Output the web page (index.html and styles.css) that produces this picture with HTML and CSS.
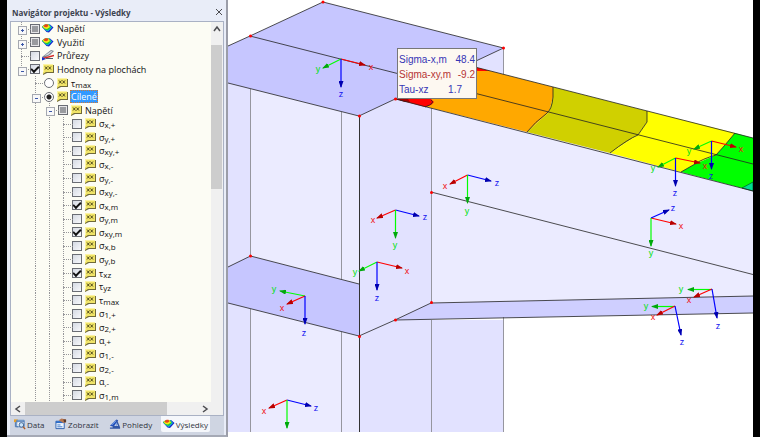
FILE: index.html
```html
<!DOCTYPE html>
<html lang="cs">
<head>
<meta charset="utf-8">
<title>Navigátor projektu - Výsledky</title>
<link rel="stylesheet" href="styles.css">
</head>
<body>
<svg class="defs" aria-hidden="true">
  <symbol id="tag" viewBox="0 0 12 11">
    <path d="M2 1H12V9H5L1 11V8.500H1.500V1Z" fill="#6f693a"/>
    <path d="M1 0H11V8H4L1 10V8Z" fill="#f0e468"/>
    <path d="M1 .5H11M1.500 0V8" stroke="#fdf4a4" fill="none"/>
    <path d="M3 2.500L5.500 5.500M5.500 2.500L3 5.500M6.500 2.500L9 5.500M9 2.500L6.500 5.500" stroke="#433d16" stroke-width=".9"/>
  </symbol>
  <symbol id="rainbow" viewBox="0 0 12 11">
    <path d="M0 4L3 1.500H8L11.500 4.500L7 9.500L4.500 9Z" fill="#1426c8"/>
    <path d="M0 4L3 1.500H7.500L10 4.500L6 8.500L4.500 8Z" fill="#12b5e8"/>
    <path d="M0 3.500L3 1.500H7L9 4.500L5.500 7.500L3 6.500Z" fill="#21cc32"/>
    <path d="M.5 3.500L3 1.500H6.500L8 4L5 6L2.500 5.500Z" fill="#f3ec19"/>
    <path d="M1.500 2.800L3.500 1.300H5.500L6.500 3L4.500 4.200L2.500 4Z" fill="#e9431b"/>
  </symbol>
  <symbol id="sections" viewBox="0 0 12 11">
    <path d="M0 7L9 0L12 1L8 5L2 8Z" fill="#7b828e"/>
    <path d="M2 6L9 1L10.500 1.500L6 5Z" fill="#d9dde3"/>
    <path d="M1 8.500L12 5.500" stroke="#d52828" stroke-width="1.300"/>
    <path d="M0 7V10.500L4 9Z" fill="#1730c8"/>
    <path d="M4 8.500H11" stroke="#555c68"/>
  </symbol>
  <symbol id="data" viewBox="0 0 13 12">
    <path d="M0 1H4V4H0Z" fill="#e5a02b"/><path d="M3 2H11V9H3Z" fill="#fff" stroke="#477cb9"/>
    <path d="M1.500 4V9H4M3 3.500H11" stroke="#3f6fae" fill="none"/>
    <circle cx="8" cy="7" r="2.500" fill="#cbe4f9" stroke="#385f91"/><path d="M10 9L12 11.500" stroke="#b35b22" stroke-width="1.500"/>
  </symbol>
  <symbol id="display" viewBox="0 0 13 12">
    <path d="M1 3H10V11H1Z" fill="#eef5ff" stroke="#285cae"/><path d="M1 3H10V5H1Z" fill="#2a6bc8"/>
    <path d="M2.500 7H6M2.500 9H8" stroke="#3975c5"/><path d="M4 2L7 0L12 1V4L9 5L6 3Z" fill="#b77750"/><path d="M9 1L12 1V4H10Z" fill="#563a2e"/>
  </symbol>
  <symbol id="views" viewBox="0 0 13 12">
    <path d="M1 8L8 1L10 2L5 9Z" fill="#2452bb"/><path d="M3 7L8 2" stroke="#8eb7f4"/>
    <path d="M8 2L11 9H4M1 10.500H12" fill="none" stroke="#3156a6" stroke-width="1.500"/><path d="M8 5V8" stroke="#6b9be9"/>
  </symbol>
</svg>
<main class="app">
  <aside class="navigator">
    <header class="title"><h1>Navigátor projektu - Výsledky</h1>
      <button class="close" aria-label="Zavřít"><svg viewBox="0 0 8 8"><path d="M1 1L7 7M7 1L1 7"/></svg></button>
    </header>
    <section class="box">
      <div class="tree">
        <div class="row"><i class="tee plus"></i><label><input type="checkbox" class="partial"><svg><use href="#rainbow"/></svg><span>Napětí</span></label></div>
        <div class="row"><i class="tee plus"></i><label><input type="checkbox" class="partial"><svg><use href="#rainbow"/></svg><span>Využití</span></label></div>
        <div class="row"><i class="tee"></i><label><input type="checkbox"><svg><use href="#sections"/></svg><span>Průřezy</span></label></div>
        <div class="row"><i class="tee end minus"></i><label><input type="checkbox" checked><svg><use href="#tag"/></svg><span>Hodnoty na plochách</span></label></div>
        <div class="row"><i></i><i class="tee"></i><label><input type="radio" name="mode"><svg><use href="#tag"/></svg><span>τ<sub>max</sub></span></label></div>
        <div class="row"><i></i><i class="tee minus"></i><label><input type="radio" name="mode" checked><svg><use href="#tag"/></svg><span class="selected">Cílené</span></label></div>
        <div class="row"><i></i><i class="line"></i><i class="tee minus"></i><label><input type="checkbox" class="partial"><svg><use href="#tag"/></svg><span>Napětí</span></label></div>
        <div class="row"><i></i><i class="line"></i><i class="line"></i><i class="tee"></i><label><input type="checkbox"><svg><use href="#tag"/></svg><span>σ<sub>x,+</sub></span></label></div>
        <div class="row"><i></i><i class="line"></i><i class="line"></i><i class="tee"></i><label><input type="checkbox"><svg><use href="#tag"/></svg><span>σ<sub>y,+</sub></span></label></div>
        <div class="row"><i></i><i class="line"></i><i class="line"></i><i class="tee"></i><label><input type="checkbox"><svg><use href="#tag"/></svg><span>σ<sub>xy,+</sub></span></label></div>
        <div class="row"><i></i><i class="line"></i><i class="line"></i><i class="tee"></i><label><input type="checkbox"><svg><use href="#tag"/></svg><span>σ<sub>x,-</sub></span></label></div>
        <div class="row"><i></i><i class="line"></i><i class="line"></i><i class="tee"></i><label><input type="checkbox"><svg><use href="#tag"/></svg><span>σ<sub>y,-</sub></span></label></div>
        <div class="row"><i></i><i class="line"></i><i class="line"></i><i class="tee"></i><label><input type="checkbox"><svg><use href="#tag"/></svg><span>σ<sub>xy,-</sub></span></label></div>
        <div class="row"><i></i><i class="line"></i><i class="line"></i><i class="tee"></i><label><input type="checkbox" checked><svg><use href="#tag"/></svg><span>σ<sub>x,m</sub></span></label></div>
        <div class="row"><i></i><i class="line"></i><i class="line"></i><i class="tee"></i><label><input type="checkbox"><svg><use href="#tag"/></svg><span>σ<sub>y,m</sub></span></label></div>
        <div class="row"><i></i><i class="line"></i><i class="line"></i><i class="tee"></i><label><input type="checkbox" checked><svg><use href="#tag"/></svg><span>σ<sub>xy,m</sub></span></label></div>
        <div class="row"><i></i><i class="line"></i><i class="line"></i><i class="tee"></i><label><input type="checkbox"><svg><use href="#tag"/></svg><span>σ<sub>x,b</sub></span></label></div>
        <div class="row"><i></i><i class="line"></i><i class="line"></i><i class="tee"></i><label><input type="checkbox"><svg><use href="#tag"/></svg><span>σ<sub>y,b</sub></span></label></div>
        <div class="row"><i></i><i class="line"></i><i class="line"></i><i class="tee"></i><label><input type="checkbox" checked><svg><use href="#tag"/></svg><span>τ<sub>xz</sub></span></label></div>
        <div class="row"><i></i><i class="line"></i><i class="line"></i><i class="tee"></i><label><input type="checkbox"><svg><use href="#tag"/></svg><span>τ<sub>yz</sub></span></label></div>
        <div class="row"><i></i><i class="line"></i><i class="line"></i><i class="tee"></i><label><input type="checkbox"><svg><use href="#tag"/></svg><span>τ<sub>max</sub></span></label></div>
        <div class="row"><i></i><i class="line"></i><i class="line"></i><i class="tee"></i><label><input type="checkbox"><svg><use href="#tag"/></svg><span>σ<sub>1,+</sub></span></label></div>
        <div class="row"><i></i><i class="line"></i><i class="line"></i><i class="tee"></i><label><input type="checkbox"><svg><use href="#tag"/></svg><span>σ<sub>2,+</sub></span></label></div>
        <div class="row"><i></i><i class="line"></i><i class="line"></i><i class="tee"></i><label><input type="checkbox"><svg><use href="#tag"/></svg><span>α<sub>,+</sub></span></label></div>
        <div class="row"><i></i><i class="line"></i><i class="line"></i><i class="tee"></i><label><input type="checkbox"><svg><use href="#tag"/></svg><span>σ<sub>1,-</sub></span></label></div>
        <div class="row"><i></i><i class="line"></i><i class="line"></i><i class="tee"></i><label><input type="checkbox"><svg><use href="#tag"/></svg><span>σ<sub>2,-</sub></span></label></div>
        <div class="row"><i></i><i class="line"></i><i class="line"></i><i class="tee"></i><label><input type="checkbox"><svg><use href="#tag"/></svg><span>α<sub>,-</sub></span></label></div>
        <div class="row"><i></i><i class="line"></i><i class="line"></i><i class="tee"></i><label><input type="checkbox"><svg><use href="#tag"/></svg><span>σ<sub>1,m</sub></span></label></div>
      </div>
      <div class="vscroll"><svg viewBox="0 0 8 8"><path d="M1 6L4 2L7 6"/></svg><div class="vthumb"></div></div>
      <div class="hscroll"><svg viewBox="0 0 8 8"><path d="M6 1L2 4L6 7"/></svg><div class="track"><div class="hthumb"></div></div><svg viewBox="0 0 8 8"><path d="M2 1L6 4L2 7"/></svg></div>
    </section>
    <nav class="tabs">
      <button><svg><use href="#data"/></svg>Data</button>
      <button><svg><use href="#display"/></svg>Zobrazit</button>
      <button><svg><use href="#views"/></svg>Pohledy</button>
      <button class="active"><svg><use href="#rainbow"/></svg>Výsledky</button>
    </nav>
  </aside>
  <section class="view">
    <svg class="model" viewBox="228 0 525 437" preserveAspectRatio="xMinYMin slice" role="img" aria-label="Model">
      <defs>
        <marker id="hr" markerWidth="7" markerHeight="5" refX="6" refY="2.500" orient="auto" markerUnits="userSpaceOnUse"><path d="M0 0L7 2.500L0 5Z" fill="#b80000"/></marker>
        <marker id="hg" markerWidth="7" markerHeight="5" refX="6" refY="2.500" orient="auto" markerUnits="userSpaceOnUse"><path d="M0 0L7 2.500L0 5Z" fill="#00a80c"/></marker>
        <marker id="hb" markerWidth="7" markerHeight="5" refX="6" refY="2.500" orient="auto" markerUnits="userSpaceOnUse"><path d="M0 0L7 2.500L0 5Z" fill="#0000b0"/></marker>
      </defs>
      <g>
        <path fill="#e2e2ff" d="M228 80H250V432H228ZM359 116L503.500 48V105L431 320H503.500V432H359Z"/>
        <path fill="#ebebff" d="M250 80H359V432H250Z"/>
        <path fill="#ebebff" d="M431 100L753 191V297L431 303Z"/>
        <path fill="#e2e2ff" d="M359 116L431 100V303L395 320L359 336Z"/>
        <path fill="#c6c6ff" d="M228 46L250 36L323 2L503.500 48L359 116L228 83Z"/>
        <path fill="#c6c6ff" d="M228 267L250.500 256L359 284V336L228 303Z"/>
        <path fill="#cfcfff" d="M395 320L431 303L753 296V313Z"/>
      </g>
      <g class="faint"><path d="M250.500 89V256M250.500 309V432M341.500 112V279M341.500 332V432M431.500 108V303M431.500 320V432M503.500 48V75M503.500 317V432"/></g>
      <g>
        <path fill="#ffa800" d="M395.500 99L467 65L553 87V97L549 112L527 132Z"/>
        <path fill="#d0d000" d="M553 87L647 111V122L638 135L610 153L527 132L549 112L553 97Z"/>
        <path fill="#ffff00" d="M647 111L735 133L725 145L716 155L695 164L681 172L610 153L638 135L647 122Z"/>
        <path fill="#00ff00" d="M735 133L753 138V191L681 172L695 164L716 155L725 145Z"/>
        <path fill="#00e090" stroke="#003d20" stroke-width=".6" d="M742 188L753 182V191Z"/>
        <path fill="#ff0000" d="M395.500 99L410 96L431 99L434 102L431 105L425 107ZM467 65L490 71L480 71L460 70Z"/>
        <path fill="#a80000" d="M396 99L408 99L410 102L405 102Z"/>
      </g>
      <g class="edges">
        <path d="M553 87V97Q552 110 546 114Q535 122 527 132M647 111V122L638 135Q628 139 610 153M735 133L725 145L716 155Q702 159 695 164L681 172M425 107Q436 103 431 100"/>
        <path d="M228 46L250 36L323 2L503.500 48L359 116L228 83M250 36L753 164M467 65L753 138M395.500 99L753 191M431 192L753 274.500M228 267L250.500 256L359 284M228 303L359 336L395 320L431 303L753 296M395 320L753 313"/>
        <path class="corner" d="M359.500 116V432"/>
      </g>
      <g fill="#f00"><circle cx="323" cy="2" r="1.500"/><circle cx="250.500" cy="36" r="1.500"/><circle cx="503.500" cy="48" r="1.500"/><circle cx="359.500" cy="116" r="1.500"/><circle cx="395.500" cy="99" r="1.500"/><circle cx="431.500" cy="192.500" r="1.500"/><circle cx="250.500" cy="256" r="1.500"/><circle cx="431.500" cy="302.500" r="1.500"/><circle cx="395.500" cy="320" r="1.500"/><circle cx="359.500" cy="336.500" r="1.500"/></g>
      <g class="axes">
        <path class="r" d="M341 59L365 65"/><path class="g" d="M341 59L323 68"/><path class="b" d="M341 59V87"/>
        <path class="r" d="M675.500 158L700 163"/><path class="g" d="M675.500 158L658 167"/><path class="b" d="M675.500 158V186"/>
        <path class="r" d="M711.500 141L736 147"/><path class="g" d="M711.500 141L694 149"/><path class="b" d="M711.500 141V169"/>
        <path class="b" d="M395.500 210L419 216"/><path class="r" d="M395.500 210L377 218"/><path class="g" d="M395.500 210V238"/>
        <path class="r" d="M377 262L402 268"/><path class="g" d="M377 262L359 271"/><path class="b" d="M377 262V290"/>
        <path class="g" d="M305 296L280 291"/><path class="r" d="M305 296L287 304"/><path class="b" d="M305 296V324"/>
        <path class="b" d="M287 400L311 406"/><path class="r" d="M287 400L269 408"/><path class="g" d="M287 400V428"/>
        <path class="b" d="M467.500 175L491 181"/><path class="r" d="M467.500 175L450 184"/><path class="g" d="M467.500 175V203"/>
        <path class="r" d="M651 218L676 224"/><path class="b" d="M651 218L669 210"/><path class="g" d="M651 218V246"/>
        <path class="g" d="M675 306.500H652"/><path class="r" d="M675 306L657 315"/><path class="b" d="M675 306L681 335"/>
        <path class="g" d="M712 289.500H688"/><path class="r" d="M712 289L694 297"/><path class="b" d="M712 289L717 318"/>
      </g>
      <g class="names">
        <g class="tr"><text x="371" y="70">x</text><text x="705" y="169">x</text><text x="741" y="152">x</text><text x="373" y="223">x</text><text x="407" y="274">x</text><text x="282" y="311">x</text><text x="264" y="414">x</text><text x="445" y="189">x</text><text x="681" y="229">x</text><text x="653" y="320">x</text><text x="689" y="303">x</text></g>
        <g class="tg"><text x="318" y="72">y</text><text x="653" y="171">y</text><text x="689" y="154">y</text><text x="395" y="248">y</text><text x="355" y="275">y</text><text x="274" y="292">y</text><text x="467" y="214">y</text><text x="651" y="256">y</text><text x="646" y="309">y</text><text x="681" y="292">y</text></g>
        <g class="tb"><text x="341" y="97">z</text><text x="675" y="196">z</text><text x="711" y="179">z</text><text x="425" y="220">z</text><text x="377" y="301">z</text><text x="304" y="336">z</text><text x="316" y="411">z</text><text x="497" y="186">z</text><text x="673" y="211">z</text><text x="682" y="345">z</text><text x="718" y="329">z</text></g>
      </g>
    </svg>
    <dl class="tip"><div><dt>Sigma-x,m</dt><dd>48.4</dd></div><div class="neg"><dt>Sigma-xy,m</dt><dd>-9.2</dd></div><div class="tau"><dt>Tau-xz</dt><dd>1.7</dd></div></dl>
  </section>
</main>
</body>
</html>
```
FILE: styles.css
```css
* { box-sizing: border-box; }
body { margin: 0; background: #000; font: 9px/13px "Open Sans", "Noto Sans", sans-serif; color: #111; }
.defs { position: absolute; width: 0; height: 0; }
.app { display: flex; height: 100vh; padding: 0 7px; }
button { font: inherit; color: inherit; border: 0; background: none; padding: 0; }

.navigator { flex: 0 0 221px; min-width: 0; display: flex; flex-direction: column; background: #e9edf8; border-right: 2px solid #9b9da8; border-bottom: 2px solid #a5a9b5; }
.title { flex: 0 0 21px; display: flex; align-items: center; justify-content: space-between; padding: 3px 3px 0 5px; }
h1 { margin: 0; font-size: 8px; font-weight: 700; color: #3c4350; white-space: nowrap; }
.close { display: flex; width: 8px; height: 8px; }
.close svg, .vscroll svg, .hscroll svg { width: 8px; height: 8px; flex: none; fill: none; stroke: #4c4c50; stroke-width: 1.5; }
.close svg { stroke-width: 1; }

.box { flex: 1; min-height: 0; margin: 0 2px 0 3px; display: grid; grid-template: minmax(0, 1fr) 13px / minmax(0, 1fr) 11px; padding-right: 1px; border: 1px solid #a9b1c4; background: #f0f0f0; }
.tree { display: grid; grid-auto-rows: minmax(0, 1fr); padding-left: 3px; background: #fcfcf4; overflow: hidden; }
.row { display: flex; min-height: 0; }
.row i { position: relative; width: 14px; flex: none; }
.row .line, .row .tee { background: repeating-linear-gradient(#96969a 0 1px, transparent 1px 2px) 7px 0 / 1px 100% no-repeat; }
.row .end { background-size: 1px 50%; }
.row .tee::before { content: ""; position: absolute; left: 7px; right: -3px; top: 50%; border-top: 1px dotted #96969a; }
.plus::after, .minus::after { content: ""; position: absolute; left: 4px; top: 4px; width: 7px; height: 7px; border: 1px solid #a5a8b0; background: linear-gradient(#3c58a8, #3c58a8) center / 3px 1px no-repeat, #f8f8f8; }
.plus::after { background: linear-gradient(#3c58a8, #3c58a8) center / 3px 1px no-repeat, linear-gradient(#3c58a8, #3c58a8) center / 1px 3px no-repeat, #f8f8f8; }
.row label { display: flex; align-items: center; gap: 2px; padding-left: 2px; white-space: nowrap; }
.row label svg { width: 12px; height: 11px; flex: none; }
.row label span { padding: 0 1px; }
.row sub { font-size: 8px; line-height: 0; vertical-align: -1px; }
.row .selected { background: #3399ff; color: #fff; outline: 1px dotted #d17a35; outline-offset: -1px; }
input { appearance: none; flex: none; margin: 0; width: 10px; height: 10px; border: 1px solid #6a6d74; background: linear-gradient(135deg, #d5dae3, #f7f8fb); }
input[type=radio] { border-radius: 50%; background: #fff; }
input[type=radio]:checked { background: radial-gradient(circle, #222 0 2px, #fff 3px); }
.partial { background: #999b9f; box-shadow: inset 0 0 0 1px #e6e6e8; }
input[type=checkbox]:checked { display: grid; place-items: center; }
input[type=checkbox]:checked::before { content: ""; width: 6px; height: 3px; margin-bottom: 2px; border: solid #111; border-width: 0 0 2px 2px; transform: rotate(-45deg); }

.vscroll { display: flex; flex-direction: column; align-items: center; }
.vscroll svg { margin: 3px 0 12px; }
.vthumb { width: 100%; height: 38%; background: #cdcdcd; }
.hscroll { display: flex; align-items: center; padding: 0 2px 0 3px; gap: 3px; }
.track { flex: 1; height: 100%; }
.hthumb { width: 82%; height: 100%; background: #cdcdcd; }

.tabs { flex: 0 0 19px; display: flex; align-items: stretch; justify-content: space-between; margin: 0 2px 0 3px; padding: 0 14px 3px 2px; background: #cfd5e2; color: #30343e; font-size: 8px; }
.tabs button { display: flex; align-items: center; gap: 1px; padding: 0 2px; white-space: nowrap; }
.tabs svg { width: 12px; height: 12px; flex: none; }
.tabs .active { background: #f5f7fb; border-radius: 0 0 2px 2px; }

.view { position: relative; flex: 1; min-width: 0; background: #fff; overflow: hidden; }
.model { display: block; width: 100%; height: 100%; }
.faint { fill: none; stroke: #96969f; }
.edges { fill: none; stroke: #222; stroke-width: .8; }
.edges .corner { stroke: #333; stroke-width: 1; }
.axes { fill: none; stroke-width: 1.2; }
.r { stroke: #f00; marker-end: url(#hr); }
.g { stroke: #0f0; marker-end: url(#hg); }
.b { stroke: #00f; marker-end: url(#hb); }
.names { font: 9px "Liberation Sans", sans-serif; text-anchor: middle; }
.tr { fill: #f01010; }
.tg { fill: #00e010; }
.tb { fill: #1010f0; }

.tip { position: absolute; left: 169px; top: 48px; width: 80px; margin: 0; padding: 3px 1px 1px; border: 1px solid #777; background: #fdf8f1; font: 10px/15px "Liberation Sans", sans-serif; color: #3535b5; }
.tip div { display: flex; justify-content: space-between; }
.tip dd { margin: 0; }
.tip .neg { color: #b53535; }
.tip .tau { padding-right: 13px; }
```
